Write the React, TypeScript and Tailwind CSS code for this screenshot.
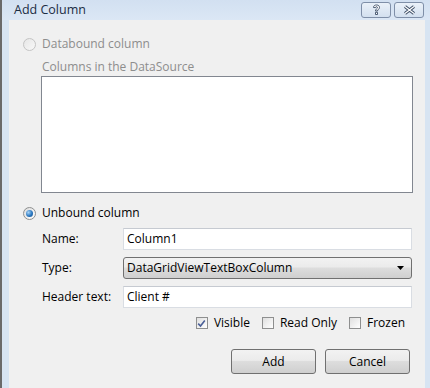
import React from 'react'

const font = { fontFamily: '"Open Sans", "Noto Sans", sans-serif' }

function Radio({ checked, disabled }: { checked?: boolean; disabled?: boolean }) {
  return (
    <span
      className={`flex h-[13px] w-[13px] shrink-0 items-center justify-center rounded-full border ${
        disabled ? 'border-[#c4c4c4] bg-[linear-gradient(135deg,#e6e6e6,#f8f8f8)]' : 'border-[#8e8f8f] bg-[linear-gradient(135deg,#dcdcdc,#ffffff)]'
      }`}
    >
      {checked && (
        <span className="h-[7px] w-[7px] rounded-full bg-[radial-gradient(circle_at_35%_35%,#a8d4f7,#2a77c0_55%,#114a86)]" />
      )}
    </span>
  )
}

function Check({ checked, label }: { checked?: boolean; label: string }) {
  return (
    <label className="flex items-center gap-[6px]">
      <span className="flex h-[12px] w-[12px] items-center justify-center border border-[#8e8f8f] bg-[linear-gradient(135deg,#dfdfdf,#ffffff)]">
        {checked && (
          <svg width="9" height="9" viewBox="0 0 9 9">
            <path d="M1.2 4.6 L3.5 7 L7.8 1.4" stroke="#4a5f97" strokeWidth="1.6" fill="none" />
          </svg>
        )}
      </span>
      <span>{label}</span>
    </label>
  )
}

function Field({ label, children }: { label: string; children: React.ReactNode }) {
  return (
    <div className="flex h-[22px] items-center">
      <span className="w-[81px] shrink-0">{label}</span>
      {children}
    </div>
  )
}

function CaptionButton({ children }: { children: React.ReactNode }) {
  return (
    <div className="flex h-[16px] w-[30px] items-center justify-center rounded-[3px] border border-[#7f8fa8] bg-[linear-gradient(180deg,#eaf1f9,#d3e0ef)]">
      {children}
    </div>
  )
}

export default function App() {
  return (
    <div style={font} className="flex h-[388px] w-[430px] flex-col overflow-hidden border-l-2 border-[#6a6a6a] bg-[#d7e4f2] text-[12px] text-black">
      <div className="flex h-[20px] shrink-0 items-center bg-[linear-gradient(180deg,#d2e0f1,#dbe7f5)] pl-[12px] pr-[6px]">
        <span className="flex-1 text-[12.5px] text-[#1b2c43]">Add Column</span>
        <div className="flex gap-[3px]">
          <CaptionButton>
            <svg width="9" height="12" viewBox="0 0 9 12">
              <path
                d="M1.5 3.5 C1.5 1.5 3 1 4.5 1 C6.5 1 7.5 2 7.5 3.5 C7.5 5 5.5 5.5 5.5 7 L3.5 7 C3.5 5 5.5 4.6 5.5 3.6 C5.5 3 5 2.7 4.5 2.7 C3.9 2.7 3.5 3 3.5 3.6 Z M3.5 8.3 H5.5 V10.5 H3.5 Z"
                fill="#ffffff"
                stroke="#3a4b63"
                strokeWidth="0.9"
              />
            </svg>
          </CaptionButton>
          <CaptionButton>
            <svg width="13" height="10" viewBox="0 0 13 10">
              <path d="M2 1.5 L11 8.5 M11 1.5 L2 8.5" stroke="#3a4b63" strokeWidth="3.2" />
              <path d="M2 1.5 L11 8.5 M11 1.5 L2 8.5" stroke="#ffffff" strokeWidth="1.3" />
            </svg>
          </CaptionButton>
        </div>
      </div>

      <div className="ml-[7px] mr-[5px] flex flex-1 flex-col bg-[#f0f0f0] pl-[14px] pr-[12px] pt-[16px]">
        <div className="flex h-[16px] items-center gap-[6px] text-[#8d8d8d]">
          <Radio disabled />
          <span>Databound column</span>
        </div>
        <div className="ml-[19px] mt-[7px] flex h-[16px] items-center text-[#8d8d8d]">Columns in the DataSource</div>
        <div className="ml-[18px] mt-[1px] h-[117px] border border-[#828790] bg-white" />

        <div className="mt-[12px] flex h-[16px] items-center gap-[6px]">
          <Radio checked />
          <span>Unbound column</span>
        </div>

        <div className="ml-[19px] mt-[7px] flex flex-col gap-[7px] pr-[1px]">
          <Field label="Name:">
            <div className="flex h-[22px] flex-1 items-center border border-[#d9dde3] border-t-[#c6cad1] bg-white pl-[3px]">Column1</div>
          </Field>
          <Field label="Type:">
            <div className="flex h-[22px] flex-1 items-center rounded-[3px] border border-[#707070] bg-[linear-gradient(180deg,#f2f2f2_0%,#ebebeb_45%,#dddddd_50%,#cfcfcf_100%)] pl-[3px] pr-[7px]">
              <span className="flex-1">DataGridViewTextBoxColumn</span>
              <svg width="7" height="4" viewBox="0 0 7 4">
                <path d="M0 0 H7 L3.5 4 Z" fill="#000" />
              </svg>
            </div>
          </Field>
          <Field label="Header text:">
            <div className="flex h-[22px] flex-1 items-center border border-[#d9dde3] border-t-[#c6cad1] bg-white pl-[3px]">Client #</div>
          </Field>
        </div>

        <div className="mt-[7px] flex h-[16px] items-center justify-end gap-[12px] pr-[8px]">
          <Check checked label="Visible" />
          <Check label="Read Only" />
          <Check label="Frozen" />
        </div>

        <div className="mt-[18px] flex justify-end gap-[9px] pr-[3px]">
          <button className="h-[25px] w-[85px] rounded-[3px] border border-[#707070] bg-[linear-gradient(180deg,#f2f2f2_0%,#ebebeb_45%,#dddddd_50%,#cfcfcf_100%)]">Add</button>
          <button className="h-[25px] w-[85px] rounded-[3px] border border-[#707070] bg-[linear-gradient(180deg,#f2f2f2_0%,#ebebeb_45%,#dddddd_50%,#cfcfcf_100%)]">Cancel</button>
        </div>
      </div>
    </div>
  )
}
